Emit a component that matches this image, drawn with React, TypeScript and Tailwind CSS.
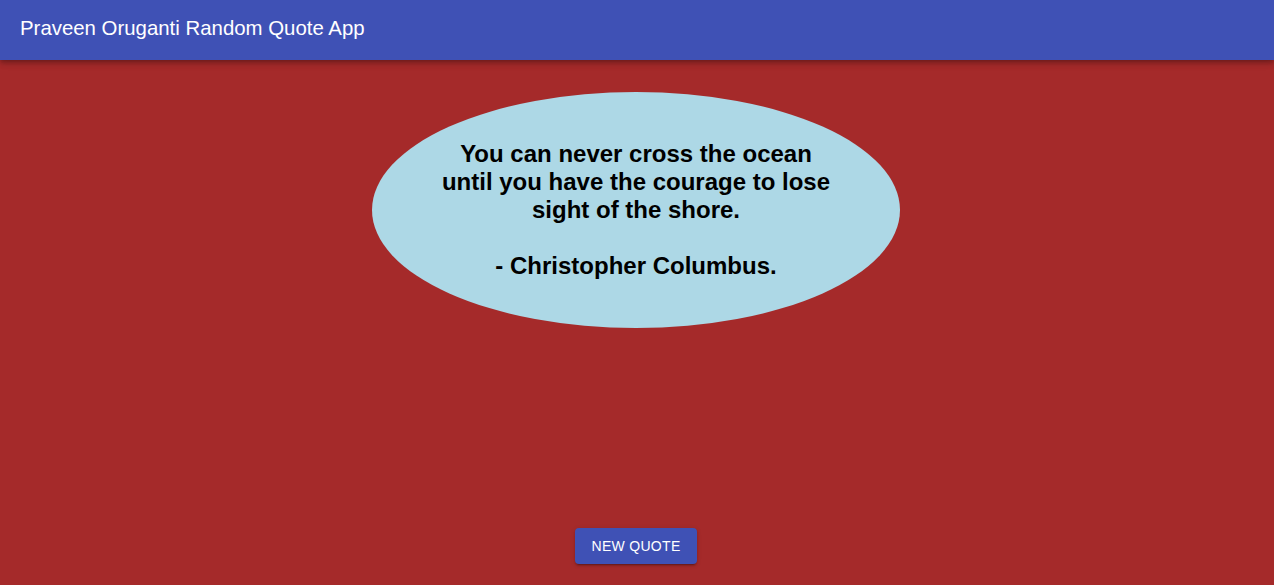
import React from "react";

export default function App() {
  return (
    <div className="min-h-[585px] h-[585px] bg-[#a52a2a] flex flex-col overflow-hidden" style={{ fontFamily: '"Liberation Sans", Arial, sans-serif' }}>
      <header className="h-[60px] bg-[#3f51b5] flex items-center px-5 shadow-[0_2px_4px_-1px_rgba(0,0,0,0.2),0_4px_5px_0_rgba(0,0,0,0.14),0_1px_10px_0_rgba(0,0,0,0.12)] relative z-10">
        <h1 className="text-white text-[20.4px] leading-none font-normal -mt-1">Praveen Oruganti Random Quote App</h1>
      </header>
      <main className="flex flex-col items-center">
        <div className="mt-[32px] w-[528px] h-[236px] rounded-[50%] bg-[#add8e6] flex items-center justify-center ml-[-2px]">
          <p className="w-[396px] text-center text-black font-bold text-[24px] leading-[28px]">
            You can never cross the ocean until you have the courage to lose sight of the shore.
            <br />
            <br />- Christopher Columbus.
          </p>
        </div>
        <button className="mt-[200px] h-[36px] w-[122px] rounded-[4px] bg-[#3f51b5] text-white text-[14px] uppercase tracking-[0.3px] shadow-[0_3px_1px_-2px_rgba(0,0,0,0.2),0_2px_2px_0_rgba(0,0,0,0.14),0_1px_5px_0_rgba(0,0,0,0.12)] ml-[-2px]">
          New Quote
        </button>
      </main>
    </div>
  );
}
